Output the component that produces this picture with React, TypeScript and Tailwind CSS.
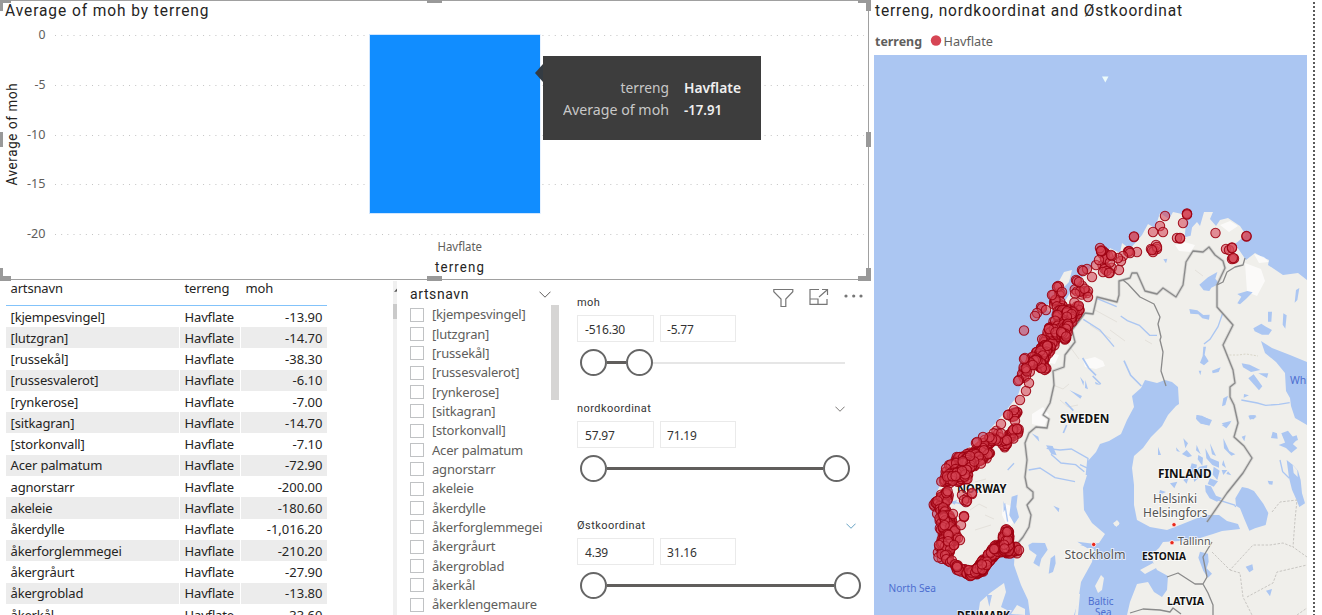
import type { ReactNode } from "react";

const DIN = "font-['Roboto',sans-serif]";

const species: [string, string][] = [
  ["[kjempesvingel]", "-13.90"],
  ["[lutzgran]", "-14.70"],
  ["[russekål]", "-38.30"],
  ["[russesvalerot]", "-6.10"],
  ["[rynkerose]", "-7.00"],
  ["[sitkagran]", "-14.70"],
  ["[storkonvall]", "-7.10"],
  ["Acer palmatum", "-72.90"],
  ["agnorstarr", "-200.00"],
  ["akeleie", "-180.60"],
  ["åkerdylle", "-1,016.20"],
  ["åkerforglemmegei", "-210.20"],
  ["åkergråurt", "-27.90"],
  ["åkergroblad", "-13.80"],
  ["åkerkål", "-33.60"],
];

const slicerItems = [...species.map((s) => s[0]), "åkerklengemaure"];

function ChartPanel() {
  const ticks: [string, number, number][] = [
    ["0", 35.5, 7],
    ["-5", 85.5, 11],
    ["-10", 135.5, 18.5],
    ["-15", 184.5, 18.5],
    ["-20", 234.5, 18.5],
  ];
  return (
    <section className="relative h-[281px] w-[871px] shrink-0">
      <svg width="871" height="281" className="block">
        {ticks.map(([label, y, width]) => (
          <g key={label}>
            <line x1="55" x2="864" y1={y} y2={y} stroke="#c4c4c4" strokeDasharray="1 5.17" />
            <text x="45.500" y={y + 3.5} textAnchor="end" fontSize="12" fill="#605e5c" fontFamily="Noto Sans" textLength={width} lengthAdjust="spacingAndGlyphs">
              {label}
            </text>
          </g>
        ))}
        <rect x="369" y="34" width="171.500" height="180" fill="#cfe6ff" />
        <rect x="370" y="35" width="170" height="178" fill="#118dff" />
        <g fontFamily="Roboto" fill="#252423">
          <text x="0" y="0" transform="translate(5 16) scale(.94 1)" fontSize="16.500" textLength="216.500">Average of moh by terreng</text>
          <text transform="translate(435 272) scale(.95 1)" fontSize="14" textLength="51.600">terreng</text>
          <text transform="translate(17 185.500) rotate(-90) scale(.95 1)" fontSize="14" textLength="107.400">Average of moh</text>
        </g>
        <text x="437.500" y="251" fontSize="12" fill="#605e5c" fontFamily="Noto Sans" textLength="44.500" lengthAdjust="spacingAndGlyphs">Havflate</text>
        <path d="M0 .5H868.5V279.500H0" fill="none" stroke="#a0a0a0" />
        <path
          d="M0 0h11v3H3v8H0zM427 0h15v3h-15zM858 0h13v11h-5V3h-8zM0 132h3v15H0zM866 132h5v15h-5zM0 268h3v8h8v5H0zM427 276h15v5h-15zM866 268h5v13h-13v-5h8z"
          fill="#999"
        />
      </svg>
      <div className="absolute left-[543px] top-[56px] flex h-[84px] w-[218px] items-center justify-end bg-[#3d3d3d] pr-5 pt-[2px] font-['Noto_Sans',sans-serif] text-sm leading-[22px]">
        <svg width="9" height="18" className="absolute -left-2 top-2">
          <path d="M8 0v18L0 9z" fill="#343b42" />
        </svg>
        <svg width="178" height="44" fontSize="14.500">
          <g fill="#c8c8c8">
            <text x="57.500" y="16" textLength="48.500" lengthAdjust="spacingAndGlyphs">terreng</text>
            <text x="0" y="38" textLength="106" lengthAdjust="spacingAndGlyphs">Average of moh</text>
          </g>
          <g fill="#f0f0f0" fontWeight="600">
            <text x="121" y="16" textLength="57" lengthAdjust="spacingAndGlyphs">Havflate</text>
            <text x="121" y="38" textLength="38" lengthAdjust="spacingAndGlyphs">-17.91</text>
          </g>
        </svg>
      </div>
    </section>
  );
}

function DataTable() {
  return (
    <section className="flex w-[397px] shrink-0 overflow-hidden font-['Noto_Sans',sans-serif] text-[13px] tracking-[-0.15px] text-[#252423]">
      <div className="w-[393px] pl-1.5">
        <div className="flex h-[25px] w-[321px] border-b border-[#83c3fa] pl-[4.500px] leading-[14px]">
          <span className="w-[174px]">artsnavn</span>
          <span className="w-[61px]">terreng</span>
          <span>moh</span>
        </div>
        {species.map(([name, value], i) => (
          <div
            key={name}
            className={`flex w-[321px] items-center ${i === 0 ? "h-[21px]" : "h-[21.300px]"} ${i % 2 ? "bg-[#ececec]" : "bg-white"}`}
          >
            <span className="flex h-full w-[173.500px] items-center border-r border-white pl-[4.500px] pt-[1.500px]">{name}</span>
            <span className="flex h-full w-[61px] items-center border-r border-white pl-[5px] pt-[1.500px]">Havflate</span>
            <span className="grow pr-[4.500px] pt-[1.500px] text-right tracking-normal">{value}</span>
          </div>
        ))}
      </div>
      <div className="flex w-1 flex-col bg-[#f0f0f0]">
        <svg width="4" height="23">
          <path d="M1 11L4 7.500v3z" fill="#555" />
        </svg>
        <div className="h-[15px] bg-[#cacaca]" />
      </div>
    </section>
  );
}

function Chevron({ color = "#605e5c", size = 12 }: { color?: string; size?: number }) {
  return (
    <svg width={size} height={size / 2 + 1} viewBox="0 0 12 7" fill="none" stroke={color}>
      <path d="M.5 .7L6 6.200L11.500 .7" />
    </svg>
  );
}

function SpeciesSlicer() {
  return (
    <section className="w-[162px] shrink-0 overflow-hidden pl-[13px] pt-1">
      <div className={`flex h-5 w-[140.500px] items-start justify-between text-sm leading-[18px] tracking-[0.6px] text-[#252423] ${DIN}`}>
        <span>artsnavn</span>
        <span className="flex h-[18px] items-center"><Chevron /></span>
      </div>
      <div className="flex justify-between">
        <ul className="w-[140px]">
          {slicerItems.map((item) => (
            <li key={item} className="flex h-[19.330px] items-center gap-2 whitespace-nowrap font-['Noto_Sans',sans-serif] text-[13px] tracking-[-0.2px] text-[#605e5c]">
              <span className="size-3.5 shrink-0 border border-[#c0c2c4]" />
              <span className="pt-px">{item}</span>
            </li>
          ))}
        </ul>
        <div className="h-[95px] w-2 bg-[#d6d5d4]" />
      </div>
    </section>
  );
}

function Knob() {
  return <span className="size-[27px] shrink-0 rounded-full border-2 border-[#666] bg-white" />;
}

function RangeSlicer({ title, low, high, chevron, children, gap }: {
  title: string;
  low: string;
  high: string;
  chevron?: ReactNode;
  children: ReactNode;
  gap: string;
}) {
  return (
    <div className={gap}>
      <div className={`flex h-4 items-center justify-between text-[11px] tracking-[0.45px] text-[#333] ${DIN}`}>
        <span>{title}</span>
        {chevron}
      </div>
      <div className="mt-1 flex gap-1.5 font-['Noto_Sans',sans-serif] text-xs tracking-[-0.2px] text-[#333]">
        <span className="flex h-[27px] w-[76.500px] items-center border border-[#eaeaea] pl-[7px] pt-0.5">{low}</span>
        <span className="flex h-[27px] w-[76.500px] items-center border border-[#eaeaea] pl-[6.500px] pt-0.5">{high}</span>
      </div>
      <div className="mt-[7px] flex items-center pl-[2.500px]">{children}</div>
    </div>
  );
}

function RangeSlicers() {
  return (
    <section className="relative w-[312px] shrink-0 pl-[18px] pt-3.5">
      <div className="absolute left-[214px] top-[7px] flex items-center">
        <svg width="90" height="20" fill="none" stroke="#767676" strokeWidth="1.200">
          <path d="M.8 1.500h19v2.200l-7 7.300v7.500H8V11L.8 3.700z" />
          <path d="M46 1.500h-9v14.800h17V11M49 1.500h5.500v5.500M54.300 1.700L46 9M37 11h8v5.300" />
          <g fill="#767676" stroke="none">
            <circle cx="73" cy="8" r="1.600" />
            <circle cx="80.700" cy="8" r="1.600" />
            <circle cx="88" cy="8" r="1.600" />
          </g>
        </svg>
      </div>
      <RangeSlicer gap="h-[106px] w-[268px]" title="moh" low="-516.30" high="-5.77">
        <Knob />
        <span className="h-[3px] w-[19px] bg-[#605e5c]" />
        <Knob />
        <span className="h-0.5 grow bg-[#e6e6e6]" />
      </RangeSlicer>
      <RangeSlicer gap="h-[117px] w-[273px]" title="nordkoordinat" low="57.97" high="71.19" chevron={<span className="pr-[5px]"><Chevron size={10} /></span>}>
        <Knob />
        <span className="h-[3px] grow bg-[#605e5c]" />
        <Knob />
      </RangeSlicer>
      <RangeSlicer gap="w-[284px]" title="Østkoordinat" low="4.39" high="31.16" chevron={<span className="pr-[5px]"><Chevron size={10} color="#4a90b8" /></span>}>
        <Knob />
        <span className="h-[3px] grow bg-[#605e5c]" />
        <Knob />
      </RangeSlicer>
    </section>
  );
}

/* Dense coastal stretches: [x1, y1, x2, y2, count, spread] */
const stretches: number[][] = [
  [1102, 250, 1108, 270, 18, 5],
  [1074, 289, 1085, 291, 12, 5],
  [1056, 292, 1060, 308, 14, 5],
  [1058, 308, 1066, 330, 26, 6],
  [1076, 304, 1070, 325, 30, 6],
  [1068, 312, 1046, 345, 90, 8],
  [1066, 325, 1063, 341, 26, 4],
  [1048, 345, 1034, 364, 70, 6],
  [1036, 360, 1045, 369, 26, 2.5],
  [1030, 362, 1024, 378, 16, 5],
  [1010, 411, 1016, 416, 10, 4],
  [1017, 430, 1004, 444, 34, 4.5],
  [998, 434, 978, 452, 44, 5.5],
  [985, 453, 958, 464, 130, 7],
  [976, 460, 950, 472, 110, 7],
  [968, 474, 944, 480, 50, 5.5],
  [949, 493, 936, 506, 40, 5],
  [940, 510, 949, 522, 34, 5],
  [945, 520, 948, 545, 110, 6.5],
  [954, 534, 942, 554, 70, 6.5],
  [944, 556, 951, 562, 10, 3],
  [955, 566, 969, 573, 20, 3],
  [969, 573, 981, 570, 50, 3.5],
  [978, 571, 998, 547, 190, 3.5],
  [998, 549, 1016, 550, 70, 4],
  [1006, 532, 1006, 550, 120, 4],
];

const singles: number[][] = [
  [1187, 214], [1187, 213.5], [1187, 214.5], [1165, 216], [1183, 223], [1160, 226], [1153, 232], [1163, 232], [1134, 237], [1134, 236.5],
  [1177, 238], [1180, 238.5], [1180, 238], [1215.5, 233], [1246.5, 236.5], [1246.5, 236],
  [1226, 249], [1229, 250], [1232, 247.5], [1232, 248], [1232, 259], [1234, 258.5], [1233, 258],
  [1156, 245], [1151, 249], [1154, 250], [1157, 249], [1153, 252], [1157, 247], [1152, 250],
  [1137, 252], [1129, 251], [1128, 251.5], [1129, 251.5], [1130, 253], [1123, 256], [1121, 261], [1119, 270], [1118, 258],
  [1100, 248], [1101, 251], [1112, 256], [1111, 255], [1096, 265], [1099, 260], [1103, 272], [1109, 273],
  [1082, 270], [1087, 269], [1083, 271], [1092, 277], [1076, 280], [1077, 281], [1079, 282], [1088, 297],
  [1058, 286], [1059, 286.5], [1057, 287], [1062, 292], [1052, 295], [1041, 307], [1042, 308], [1046, 310], [1037, 313], [1035, 316],
  [1024, 330.5], [1025, 358], [1024, 359], [1019, 380], [1018, 381], [1029, 383], [1026, 391], [1020, 400],
  [1014, 410], [1008, 415], [1001, 424], [983, 437], [976, 443], [977, 442], [1015, 421], [1017, 429], [1007, 440],
  [962, 495], [967, 498], [972, 494], [972, 493], [966, 502], [964, 500], [967, 501],
  [953, 514], [964, 516], [964, 517], [964, 516.5], [961, 525], [958, 538], [960, 540], [954, 545], [995, 549], [994, 549],
  [1008, 531], [1007, 532], [1019, 550], [939, 545],
];

function wobble(n: number) {
  const v = Math.sin(n * 12.9898) * 43758.5453;
  return (v - Math.floor(v)) * 2 - 1;
}

function mapPoints() {
  const points: number[][] = [];
  stretches.forEach(([x1, y1, x2, y2, count, spread], s) => {
    for (let i = 0; i < count; i++) {
      const t = (wobble(s * 311 + i * 3 + 1) + 1) / 2;
      const angle = wobble(s * 131 + i * 5 + 2) * Math.PI;
      const radius = Math.sqrt(Math.abs(wobble(s * 71 + i * 7 + 3))) * spread;
      points.push([x1 + (x2 - x1) * t + Math.cos(angle) * radius, y1 + (y2 - y1) * t + Math.sin(angle) * radius]);
    }
  });
  return points.concat(singles);
}

function MapVisual() {
  return (
    <svg width="433" height="560" viewBox="874 55 433 560" className="block shrink-0 bg-[#abc6f2]" fontFamily="Noto Sans">
      <path
        d="M1307 615H1127L1130 602L1137 584L1148 582L1154 592L1162 597L1167 590L1168 576L1157 570L1150 556L1159 548L1163 542L1180 541L1200 538L1213 534L1222 531L1240 529L1238 524L1227 521L1219 515L1205 515L1195 519L1180 525L1167 530L1150 527L1137 520L1134 505V485L1132 468L1134 456L1143 448L1151 437L1162 426L1168 415L1176 406L1179 404L1178 387L1172 382L1165 380L1157 383L1145 380L1141 388L1132 396L1134 407L1127 420L1121 434L1109 441L1100 444L1096 452L1087 462L1087 475L1083 488L1084 510L1092 523L1105 534L1099 543L1080 545L1094 549L1092 562L1081 582L1078 602L1074 615H1030L1028 600L1021 585L1014 565L1015 548L1008 536L1002 548L990 560L978 574L960 573L948 562L940 545L936 515L933 500L945 475L965 450L985 435L1005 412L1018 395L1028 365L1045 340L1058 312L1075 285L1093 265L1098 251L1107 254L1110 248L1120 253L1122 243L1130 249L1142 235L1148 224L1155 228L1160 213L1169 219L1173 212L1182 214L1190 209L1190 220L1186 234L1197 222L1200 226L1204 212L1213 212L1210 219L1216 226L1220 220L1228 218L1240 226L1246 235L1235 244L1246 260L1255 253L1262 257L1269 260L1268 265L1283 275L1298 273L1307 280Z"
        fill="#f0efeb"
      />
      <g fill="#f0efeb">
        <path d="M978 615L980 602L990 593L1004 583L1006 592L1001 607L1007 610L1005 615ZM1098 593L1095 586L1101 575L1104 578L1102 590ZM1140 570L1153 563L1158 567L1145 574ZM1148 556L1153 554L1156 559L1151 561ZM1075 615L1078 594L1080 594L1078 615ZM1113 523L1118 521L1119 525L1115 526ZM1058 283L1064 272L1072 270L1069 282L1060 291ZM1044 308L1050 303L1056 306L1050 312Z" />
        <path d="M1011 614L1017 605L1025 609L1025 615Z" />
      </g>
      <g fill="#fff" opacity=".7">
        <path d="M1083 360l12-3 8 4 2 5-9 3-11-2zM1245 263l16 6 4 12-8 15-10-4zM1254 254l10 3 5 5-10 1zM1175 245l9-3 11 3-4 7-12-1zM1032 414l11-7 6 8-5 12-12-3zM1003 503l8 3 5 14-8 8-6-13zM1047 352l12 3-4 9-10-2zM1220 225l10-4 8 5-9 6z" />
      </g>
      <g fill="none" stroke="#e4e1db" strokeWidth="1">
        <path d="M1053 385l10 4 6-5M1060 400l8 7 10-2M1095 310l22 12M1090 325l21 14M1110 330l15 11M965 465l8 4M975 482l11-3M970 510l9-6 8 4M975 530l16-5M985 515l9 4M1145 340l7 4M1195 270l8 6M1065 340l14 19" />
      </g>
      <path d="M1261 341L1272 348L1290 355L1307 362V425L1295 418L1291 406L1290 398L1286 391L1285 373L1276 362L1265 353Z" fill="#abc6f2" />
      <g transform="translate(1080 370) scale(.33333)" fill="#abc6f2">
        <path d="M466 385l20-34 18 4 18 8 28 38 15 28-8 36-32 10-17 7-15-35-13-32-12-8zM620 270l18 14 16 18 8 28 4 40 9 30-17 11-8-20-14-32-9-36zM360 545l24 6 2 24-6 20 16 16-12 12-14-20-15-40zM350 135l18 5 28 10-8 17-24-7-16-14zM425 160l30-8-16 18zM505 137l17-1 8 5-20 8zM492 72l15 4-16 7zM578 185l13 5 2 16-20-2zM605 190l20 14 25-8 4 14-20 8 18 16-18 15-16-15-22-9 22-8zM563 332l16 2-2 10-10-1zM497 590l20-7 3 16-12 8zM558 662l18-5-6 22zM0 20l12 15-2 12zM16 30l8 28-9-4zM234 230l9 25h-9zM320 240l16 18-12 4-18-10z" />
        <path d="M310 205l14 15-8 15zM350 225l12 28-14-12zM376 235l16 30 25 10 0 18-20-8-18-20zM390 220l18 38-12-5zM430 205l18 38 18 10-12 4-22-22zM335 280l16 4-5 24-19 0zM358 290l24-5-5 32-20 5-14 14-5-22zM401 290l18 12-7 28-14-16zM430 270l8 24-12-9zM375 345l18 4 15 28 18 7-15 11-22-10-12-20zM240 360l18 6-22 10zM270 340l22-5-9 20zM288 232l12 14-10-3zM425 300l17 0-12 15zM355 255l14 8-2 24-14-19zM444 304l10 12-15-4zM390 325l24 9-13 16-18-8zM310 330l18-14-8 25z" />
        <path d="M484 90l48 9 25 7 40-3 32-5M600 270l8 35 20 20M400 385l64 20 3 6M0 284l24 11" fill="none" stroke="#abc6f2" strokeWidth="4" />
        <path d="M638 285l14 16 1 20-12-12zM101 459l10-9 8 10-10 11z" fill="#f0efeb" />
      </g>
      <g transform="translate(1040 250) scale(.33333)" fill="#abc6f2">
        <path d="M478 104l26-22 28-16-6 20 12 15-24 12-6 10-17-2zM448 177l24 4 18 14 19-1-2 15-20-4-12-12-24-2zM592 132l30-9 16 4-20 20-18 16-8-3 12-20zM640 235l24-14 14 9 18 10-10 14-20 0-22-10zM684 185l12 0-2 30-10 0zM730 190l10 6-4 40-8-12zM768 120l10-6-6 36-8 8zM605 340l24 4 32 16-28 6-24-14zM625 385l16-12 26 36-10 12zM655 370l30 0-4 14zM490 290l8 0-4 24 12 20-14 12-12-8 8-20zM476 362l8 0-3 14zM516 362l26-10-6 14-18 4zM470 495l16 2 24 12-6 16-22-4-12-12zM545 525l28-8-14 18zM550 445l14-8-8 28-10 4zM724 550l20-8 24 30-18 20-14-12zM628 496l20 0-6 12-10-1zM370 28l12-2-4 14zM605 560l12-4-4 18z" />
        <path d="M128 324l18 30 22 22M158 378l24 24M76 456l24 26M80 525l-10 24M252 332l20 44 32 32" fill="none" stroke="#abc6f2" strokeWidth="5" />
        <path d="M548 190l-14 40-24 38-18 14M130 208l50 32 42 50M170 145l60 25M242 198l20 14 36 14 31 30h22" fill="none" stroke="#abc6f2" strokeWidth="4" />
      </g>
      <g transform="translate(1080 190) scale(.33333)" fill="#abc6f2">
        <path d="M320 76l15-7-12 48 14-10-5 30-18 5z" />
      </g>
      <g transform="translate(870 380) scale(.33333)" fill="#abc6f2">
        <path d="M475 495l12-7 38 1 8 20-19 27-6 24-18-11 10-24-22-16zM542 535l13-10 2 25-8 26-13 5zM528 196l20 2 12 28-16-4zM400 362l6 25-5 10zM425 350l18-6-4 36 8 32-14 20-15-26zM550 377l18 8-2 12zM598 30l38 18-5 8zM675 5l18 10-16-2zM485 160l20 10 3 15zM622 485l72 9-42 11zM350 645l16 0-8 35zM240 366l22-6-8 14z" />
        <path d="M530 205l40 5 34-3 50 28-5 50M543 223l30 26 44 5 26 21M476 270l34-6 45 29 60 12M413 270l19-20M404 370l9 55M240 365l29 5 18 11" fill="none" stroke="#abc6f2" strokeWidth="4" />
      </g>
      <path d="M1226 355h12l8-1 12 2" fill="none" stroke="#d8d5c8" strokeDasharray="2 1.500" />
      <g fill="none" stroke="#aaa" strokeOpacity=".35" strokeWidth="3" strokeLinejoin="round">
        <path d="M1018 543L1023 537L1029 527L1031 515L1027 505L1033 498L1033 492L1027 487L1025 477L1027 460L1025 443L1029 433L1036 427L1047 428L1049 419L1043 415L1050 403L1054 385L1053 371L1064 367L1065 355L1075 342L1072 330L1079 321L1085 313L1093 314L1097 297L1117 302L1119 295V281L1130 278L1132 273L1137 273L1145 291L1157 294L1163 288L1176 297L1183 285L1186 262L1193 251L1203 252L1209 247L1215 255L1223 261L1225 268L1217 285L1217 307L1233 325L1223 345L1233 370L1235 383L1230 387V397L1234 405L1238 423L1234 437L1244 446L1252 458L1243 473L1227 493L1207 522" />
      </g>
      <g fill="none" stroke="#8a8a8a" strokeWidth="1.300" strokeLinejoin="round">
        <path d="M1018 543L1023 537L1029 527L1031 515L1027 505L1033 498L1033 492L1027 487L1025 477L1027 460L1025 443L1029 433L1036 427L1047 428L1049 419L1043 415L1050 403L1054 385L1053 371L1064 367L1065 355L1075 342L1072 330L1079 321L1085 313L1093 314L1097 297L1117 302L1119 295V281L1130 278L1132 273L1137 273L1145 291L1157 294L1163 288L1176 297L1183 285L1186 262L1193 251L1203 252L1209 247L1215 255L1223 261L1225 268L1217 285L1217 307L1233 325L1223 345L1233 370L1235 383L1230 387V397L1234 405L1238 423L1234 437L1244 446L1252 458L1243 473L1227 493L1207 522" />
        <path d="M1123 280L1128 284L1140 297L1154 304L1160 317L1158 324L1161 337L1160 340L1163 352L1161 371L1166 386M1217 285L1223 282L1227 272L1235 267L1243 265L1245 258M1212 542L1203 557L1207 577L1203 584L1195 584L1178 573L1167 577M1203 584L1208 593L1213 605V615M1130 613L1143 609L1160 610L1170 612L1173 608L1181 614" />
      </g>
      <path d="M1272 512L1280 502L1297 500L1295 520L1293 547L1307 557M1212 552L1230 570L1253 545H1270L1283 543L1293 547M1230 570L1240 573L1243 597L1252 615M1247 597L1273 583L1277 572L1307 565M1297 615L1307 608" fill="none" stroke="#c8c6c2" strokeDasharray="2.500 1.500" />
      <path d="M1102 76.500h6.500l-3.200 6z" fill="#edfbfa" />
      <g fill="#111" fontWeight="700" fontSize="12.500" stroke="#fff" strokeWidth="2" paintOrder="stroke" strokeOpacity=".7">
        <text x="1060" y="423" textLength="49.500" lengthAdjust="spacingAndGlyphs">SWEDEN</text>
        <text x="1158" y="477.500" textLength="53.500" lengthAdjust="spacingAndGlyphs">FINLAND</text>
        <text x="957" y="492.500" textLength="49.500" lengthAdjust="spacingAndGlyphs">NORWAY</text>
        <text x="957" y="620" textLength="53" lengthAdjust="spacingAndGlyphs">DENMARK</text>
        <text x="1142" y="560" fontSize="10.500" textLength="44" lengthAdjust="spacingAndGlyphs">ESTONIA</text>
        <text x="1167" y="605" fontSize="10.500" textLength="37" lengthAdjust="spacingAndGlyphs">LATVIA</text>
      </g>
      <g fill="#555" fontSize="12.500" stroke="#fff" strokeWidth="2" paintOrder="stroke" strokeOpacity=".7">
        <text x="1153" y="503" textLength="44" lengthAdjust="spacingAndGlyphs">Helsinki</text>
        <text x="1143" y="517" textLength="64.500" lengthAdjust="spacingAndGlyphs">Helsingfors</text>
        <text x="1064.500" y="559" textLength="61" lengthAdjust="spacingAndGlyphs">Stockholm</text>
        <text x="1178" y="545" fontSize="11" textLength="32.500" lengthAdjust="spacingAndGlyphs">Tallinn</text>
      </g>
      <g fill="#4d6ed0" fontSize="10.500">
        <text x="888.500" y="592" textLength="47.500" lengthAdjust="spacingAndGlyphs">North Sea</text>
        <text x="1088" y="605" textLength="25.500" lengthAdjust="spacingAndGlyphs">Baltic</text>
        <text x="1095" y="616" textLength="16.500" lengthAdjust="spacingAndGlyphs">Sea</text>
        <text x="1290" y="384">White Sea</text>
      </g>
      <g fill="#e8291c" stroke="#fff" strokeWidth=".8">
        <circle cx="1174" cy="524.700" r="2.200" />
        <circle cx="1172" cy="542.700" r="2.200" />
        <circle cx="1093.700" cy="544.500" r="2.200" />
      </g>
      <g fill="#d64554" fillOpacity=".58" stroke="#9c0011" strokeOpacity=".9" strokeWidth="1.050">
        {mapPoints().map(([x, y], i) => (
          <circle key={i} cx={x} cy={y} r="4.700" />
        ))}
      </g>
    </svg>
  );
}

export default function App() {
  return (
    <main className="flex h-[615px] w-[1322px] overflow-hidden bg-white">
      <div className="flex w-[874px] shrink-0 flex-col">
        <ChartPanel />
        <div className="flex min-h-0 grow">
          <DataTable />
          <SpeciesSlicer />
          <RangeSlicers />
        </div>
      </div>
      <section className="flex w-[433px] shrink-0 flex-col">
        <svg width="433" height="55" className="block shrink-0">
          <text transform="translate(1 16) scale(.94 1)" fontFamily="Roboto" fontSize="16.500" fill="#252423" textLength="326.600">terreng, nordkoordinat and Østkoordinat</text>
          <g fontFamily="Noto Sans" fontSize="13" fill="#605e5c">
            <text x="1" y="46" fontWeight="700" textLength="47" lengthAdjust="spacingAndGlyphs">terreng</text>
            <text x="69.500" y="46" textLength="49.500" lengthAdjust="spacingAndGlyphs">Havflate</text>
          </g>
          <circle cx="62" cy="40.500" r="5.200" fill="#d64554" />
        </svg>
        <MapVisual />
      </section>
      <div className="ml-1.5 mt-0.5 w-0.5 bg-[repeating-linear-gradient(#5a5a5a_0_2px,transparent_2px_4px)]" />
    </main>
  );
}
